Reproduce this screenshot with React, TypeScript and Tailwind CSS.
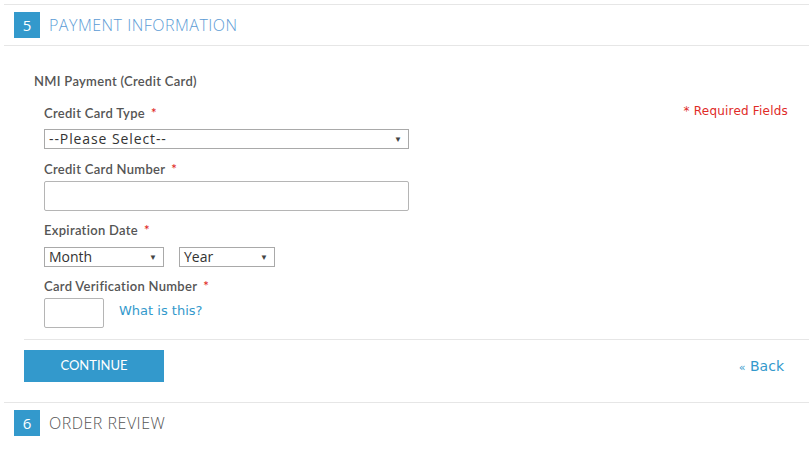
const label = "text-[13px] leading-[18px] font-semibold tracking-[0.3px] text-[#555] font-['Lato','Open_Sans',sans-serif]"

const Req = () => <span className="ml-[6px] text-[#e02b27]">*</span>

const Arrow = () => (
  <span className="pointer-events-none absolute right-[6px] top-1/2 -translate-y-1/2 text-[8px] leading-none text-[#444]">▼</span>
)

const FakeSelect = ({ text, width, track = '' }: { text: string; width: string; track?: string }) => (
  <div className={`relative h-[20px] ${width} border border-[#a9a9a9] bg-white`}>
    <span className={`block pl-[4px] text-[14px] leading-[18px] text-[#333] font-['Open_Sans',sans-serif] ${track}`}>{text}</span>
    <Arrow />
  </div>
)

const StepHeader = ({ num, title, color }: { num: number; title: string; color: string }) => (
  <div className="flex items-center gap-[9px] border-t border-[#e6e6e6] pl-[10px] pt-[7px] pb-[7px]">
    <div className="flex h-[26px] w-[26px] items-center justify-center bg-[#3399cc] text-[15px] text-white font-['Open_Sans',sans-serif]">
      {num}
    </div>
    <div className={`text-[16px] uppercase tracking-[0.5px] font-light font-['Open_Sans',sans-serif] ${color}`}>{title}</div>
  </div>
)

export default function App() {
  return (
    <div className="min-h-[466px] bg-white pt-1 pl-1">
      <StepHeader num={5} title="Payment Information" color="text-[#5b9bd5]" />
      <div className="border-t border-[#e6e6e6] pl-5 pt-[25px]">
        <div className="ml-[10px] text-[13px] leading-[20px] font-semibold tracking-[0.3px] text-[#555] font-['Lato','Open_Sans',sans-serif]">
          NMI Payment (Credit Card)
        </div>
        <div className="flex justify-between">
          <div className="ml-[20px] w-[365px]">
            <div className={`mt-[13px] ${label}`}>
              Credit Card Type<Req />
            </div>
            <div className="mt-[7px]">
              <FakeSelect text="--Please Select--" width="w-[365px]" track="tracking-[0.9px]" />
            </div>

            <div className={`mt-[11px] ${label}`}>
              Credit Card Number<Req />
            </div>
            <input className="mt-[3px] block h-[30px] w-[365px] rounded-[2px] border border-[#b5b5b5] bg-white" />

            <div className={`mt-[10px] ${label}`}>
              Expiration Date<Req />
            </div>
            <div className="mt-[8px] flex gap-[15px]">
              <FakeSelect text="Month" width="w-[120px]" />
              <FakeSelect text="Year" width="w-[96px]" />
            </div>

            <div className={`mt-[10px] ${label}`}>
              Card Verification Number<Req />
            </div>
            <div className="mt-[3px] flex items-center gap-[15px]">
              <input className="block h-[30px] w-[60px] rounded-[2px] border border-[#b5b5b5] bg-white" />
              <a className="-mt-[4px] text-[13px] text-[#3399cc] font-['DejaVu_Sans',sans-serif]">What is this?</a>
            </div>
          </div>
          <div className="mt-[12px] mr-[21px] text-[12px] leading-[16px] tracking-[0.2px] text-[#e02b27] font-['DejaVu_Sans',sans-serif]">
            * Required Fields
          </div>
        </div>

        <div className="mt-[11px] flex items-center justify-between border-t border-[#e6e6e6] pt-[10px] pb-[20px] pr-[25px]">
          <button className="h-[32px] w-[140px] bg-[#3399cc] text-[13px] text-white font-['Lato','Open_Sans',sans-serif]">
            CONTINUE
          </button>
          <a className="text-[14px] text-[#3399cc] font-['DejaVu_Sans',sans-serif]">
            <span className="text-[11px]">«</span> Back
          </a>
        </div>
      </div>
      <StepHeader num={6} title="Order Review" color="text-[#555]" />
    </div>
  )
}
